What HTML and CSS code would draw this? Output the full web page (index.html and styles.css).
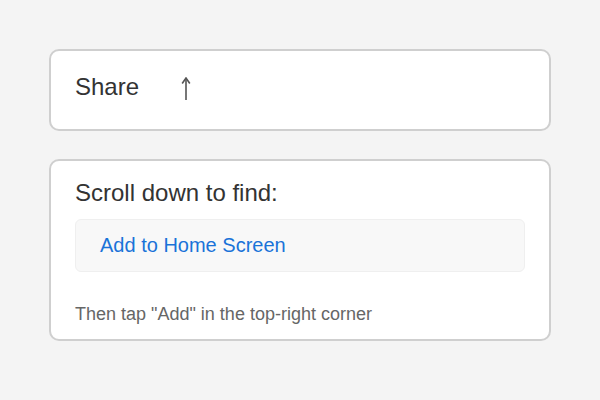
FILE: index.html
```html
<!DOCTYPE html>
<html>
<head>
<meta charset="utf-8">
<link rel="stylesheet" href="styles.css">
</head>
<body>
  <main class="page">
    <section class="card card-share">
      <div class="share-row">
        <span class="share-label">Share</span>
        <svg class="share-icon" width="10" height="24" viewBox="0 0 10 24" aria-label="↑">
          <path d="M5 1.5 V23" stroke="#555" stroke-width="1.6" fill="none"/>
          <path d="M1.2 6.5 L5 1 L8.8 6.5" stroke="#555" stroke-width="1.6" fill="none" stroke-linejoin="miter"/>
        </svg>
      </div>
    </section>
    <section class="card card-steps">
      <div class="steps-title">Scroll down to find:</div>
      <div class="option-box">
        <span class="option-link">Add to Home Screen</span>
      </div>
      <div class="steps-note">Then tap "Add" in the top-right corner</div>
    </section>
  </main>
</body>
</html>
```
FILE: styles.css
```css
html, body {
  margin: 0;
  padding: 0;
  background: #f4f4f4;
}
body {
  font-family: "Liberation Sans", Arial, sans-serif;
  width: 600px;
  height: 400px;
  overflow: hidden;
}
.page {
  padding: 49px 49px 0;
  display: flex;
  flex-direction: column;
  gap: 28px;
}
.card {
  background: #fff;
  border: 2px solid #cfcfcf;
  border-radius: 10px;
  box-sizing: border-box;
}
.card-share {
  height: 82px;
  padding: 22px 24px 0;
}
.share-row {
  display: flex;
  align-items: center;
  line-height: 28px;
  height: 28px;
}
.share-label {
  font-size: 24px;
  color: #333;
}
.share-icon {
  margin-left: 42px;
  margin-top: 4px;
  display: block;
}
.card-steps {
  height: 182px;
  padding: 18px 24px 0;
}
.steps-title {
  font-size: 24px;
  line-height: 28px;
  color: #333;
}
.option-box {
  margin-top: 12px;
  background: #f8f8f8;
  border: 1px solid #efefef;
  border-radius: 6px;
  padding: 13px 24px 12px;
  line-height: 24px;
}
.option-link {
  font-size: 20px;
  color: #1a73d8;
}
.steps-note {
  margin-top: 32px;
  font-size: 18px;
  line-height: 20px;
  color: #666;
}
```
